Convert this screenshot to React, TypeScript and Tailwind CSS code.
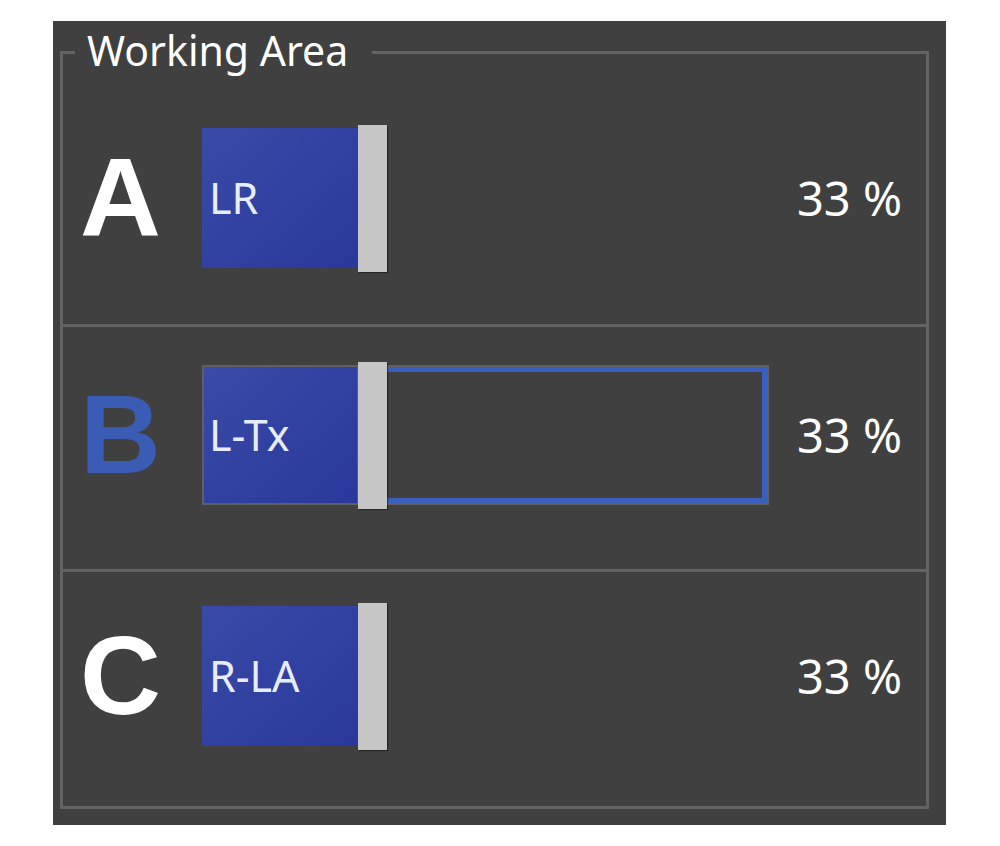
import React from "react";

type Row = {
  letter: string;
  label: string;
  percent: string;
  active?: boolean;
  pad: string;
  height: string;
};

const rows: Row[] = [
  { letter: "A", label: "LR", percent: "33 %", pad: "pt-[74px]", height: "h-[270px]" },
  { letter: "B", label: "L-Tx", percent: "33 %", active: true, pad: "pt-[38px]", height: "h-[242px]" },
  { letter: "C", label: "R-LA", percent: "33 %", pad: "pt-[34px]", height: "flex-1" },
];

function Slider({ label, active }: { label: string; active?: boolean }) {
  return (
    <div className="relative flex h-[140px]">
      {active ? (
        <div className="flex h-[140px] w-[567px] border-2 border-[#606060]">
          <div className="flex h-full w-[153px] items-center bg-gradient-to-br from-[#3a4aa8] to-[#29389a] pl-[5px]">
            <span className="text-[43px] text-[#e8ecff] [font-family:'Noto_Sans',sans-serif]">{label}</span>
          </div>
          <div className="h-full flex-1 border-[5px] border-[#3b5fc0]" />
        </div>
      ) : (
        <div className="flex h-[140px] w-[156px] items-center bg-gradient-to-br from-[#3a4aa8] to-[#29389a] pl-[7px]">
          <span className="text-[43px] text-[#e8ecff] [font-family:'Noto_Sans',sans-serif]">{label}</span>
        </div>
      )}
      <div className="absolute left-[156px] top-[-3px] h-[147px] w-[29px] bg-[#c6c6c6] shadow-[1px_1px_1px_rgba(0,0,0,0.4)]" />
    </div>
  );
}

export default function App() {
  return (
    <div className="min-h-screen bg-white">
      <div className="pl-[53px] pt-[21px]">
        <div className="h-[804px] w-[893px] bg-[#404040] pb-[16px] pl-[7px] pr-[17px] pt-[30px]">
          <div className="relative flex h-full flex-col border-[3px] border-[#636363]">
            <div className="absolute left-[12px] top-[-24px] bg-[#404040] pl-[12px] pr-[24px] text-[41px] leading-none text-white [font-family:'Noto_Sans',sans-serif]">
              Working Area
            </div>
            {rows.map((row, i) => (
              <React.Fragment key={row.letter}>
                {i > 0 && <div className="h-[3px] bg-[#636363]" />}
                <div className={`${row.height} ${row.pad}`}>
                  <div className="flex items-center">
                    <div
                      className={`w-[139px] pl-[17px] text-[112px] font-bold leading-none [font-family:'Liberation_Sans',Arial,sans-serif] ${
                        row.active ? "text-[#3b5cb5]" : "text-white"
                      }`}
                    >
                      {row.letter}
                    </div>
                    <Slider label={row.label} active={row.active} />
                    <div className="ml-auto pr-[24px] text-[47px] text-white [font-family:'Noto_Sans',sans-serif]">
                      {row.percent}
                    </div>
                  </div>
                </div>
              </React.Fragment>
            ))}
          </div>
        </div>
      </div>
    </div>
  );
}
